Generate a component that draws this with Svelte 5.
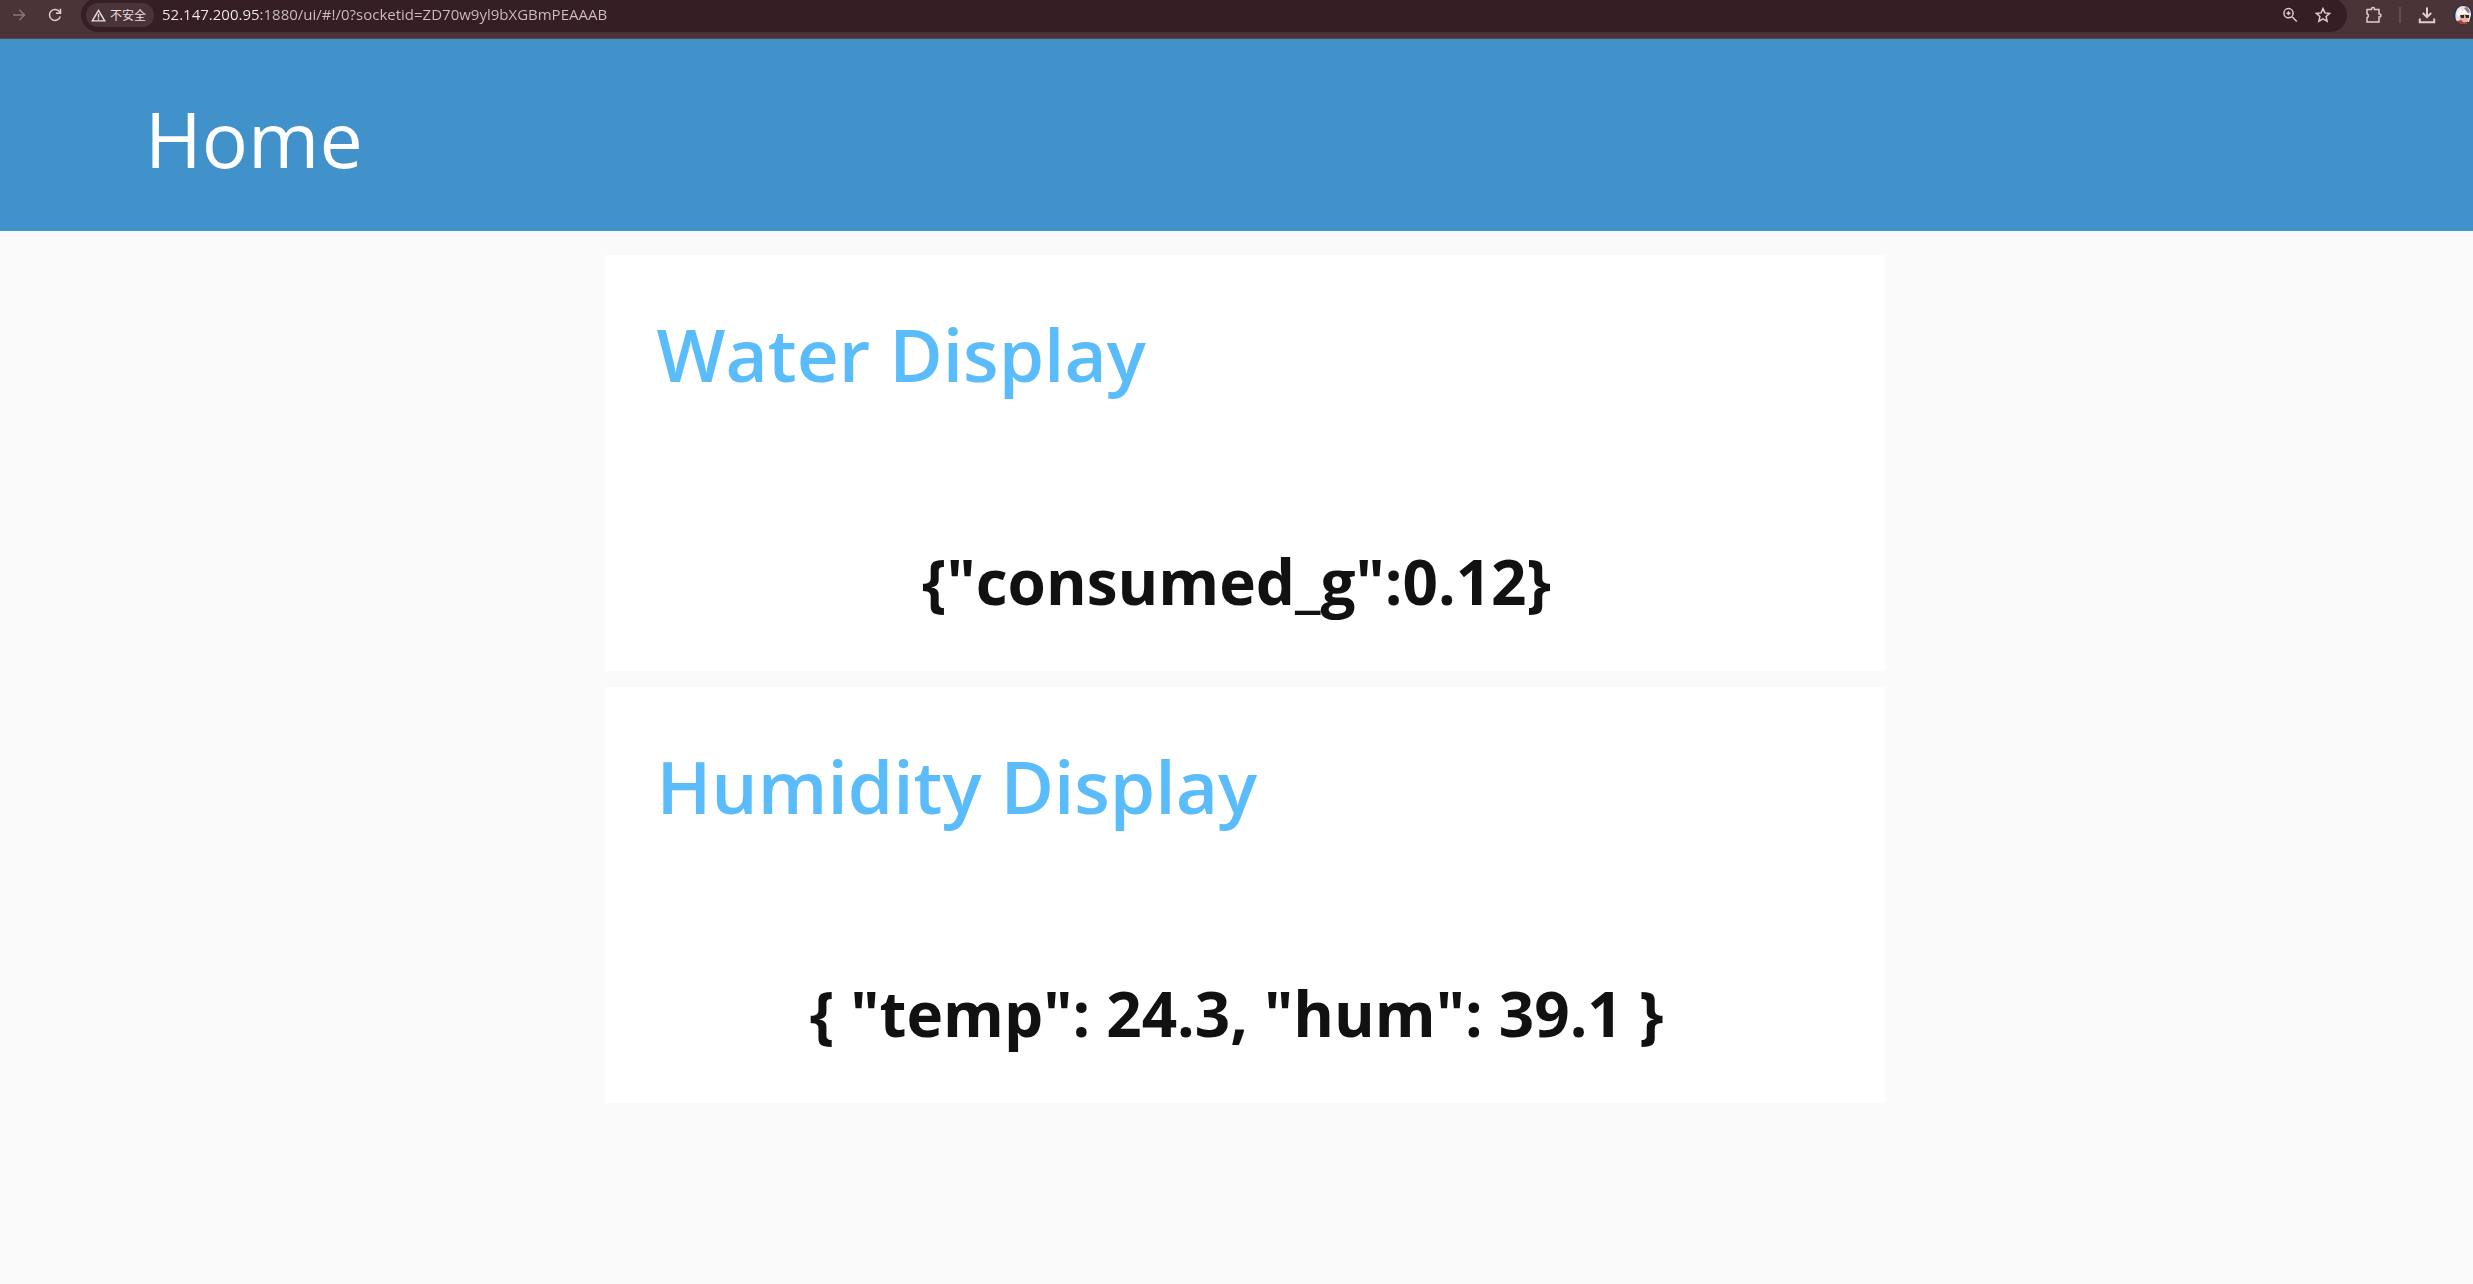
<script>
  const address = '52.147.200.95:1880/ui/#!/0?socketid=ZD70w9yl9bXGBmPEAAAB';
  const groups = [
    { title: 'Water Display', value: '{"consumed_g":0.12}' },
    { title: 'Humidity Display', value: '{ "temp": 24.3, "hum": 39.1 }' }
  ];
</script>

<div class="browser">
  <button class="icon forward" aria-label="Forward">
    <svg viewBox="0 0 16 16"><path d="M2 8h11M8.500 3l5 5-5 5" /></svg>
  </button>
  <button class="icon" aria-label="Reload">
    <svg viewBox="0 0 16 16"><path d="M12.800 5.200A5.500 5.500 0 1 0 13.300 9.500M13.500 1.800v4.500H9" /></svg>
  </button>
  <div class="omnibox">
    <button class="security">
      <svg viewBox="0 0 16 16"><path d="M8 2.500 14.600 13.700H1.400ZM8 6.500v3.500M8 11v1.500" /></svg>
      <span>不安全</span>
    </button>
    <input class="url" aria-label="Address" value={address} spellcheck="false" />
    <button class="icon" aria-label="Zoom">
      <svg viewBox="0 0 16 16"><circle cx="6.500" cy="6.200" r="4.600" /><path d="m10 9.700 4.800 4.800M6.500 4.200v4M4.500 6.200h4" /></svg>
    </button>
    <button class="icon star" aria-label="Bookmark">
      <svg viewBox="0 0 16 16"><path d="m8 1.600 1.900 4.300 4.700.5-3.500 3.100 1 4.700L8 11.800l-4.100 2.400 1-4.700L1.400 6.400l4.700-.5Z" /></svg>
    </button>
  </div>
  <button class="icon large" aria-label="Extensions">
    <svg viewBox="0 0 18 18"><path d="M2 3.500h4.500V3a1.500 1.500 0 0 1 3 0v.500H14V8h.500a1.500 1.500 0 0 1 0 3H14v5H2v-4.200a2.200 2.200 0 0 0 0-4.100Z" /></svg>
  </button>
  <span class="divider"></span>
  <button class="icon large" aria-label="Downloads">
    <svg viewBox="0 0 18 18"><path class="bold" d="M9 1.500v9.500M4.800 7 9 11.200 13.200 7M1.800 12.500v3.700h14.400v-3.700" /></svg>
  </button>
  <button class="profile" aria-label="Profile">
    <svg viewBox="0 0 20 20">
      <circle cx="10" cy="10" r="10" fill="#32304f" />
      <path d="M3 15C1 8 4 1 10 1s8 4 8 9l-2 7H5Z" fill="#e9dfdf" />
      <path d="M7 10c3-2 6-2 9 0l-1 5-4 3-4-3Z" fill="#e5b29b" />
      <path d="M7 10h4v3H8ZM12 10h4v3h-3Z" fill="#30282b" />
      <path d="m4 9 3-6 2 5 2-4 5 6-5-1-6 2Z" fill="#fff8f3" />
      <path d="m4 16 4-1 3 3 4-2-1 3H7Z" fill="#b23d36" />
      <path d="m11 3 3-1 3 5-2 1Z" fill="#817985" />
    </svg>
  </button>
</div>

<header><h1>Home</h1></header>

<main>
  {#each groups as group}
    <section>
      <h2>{group.title}</h2>
      <p>{group.value}</p>
    </section>
  {/each}
</main>

<style>
  :global(body) {
    margin: 0;
    background: #fafafa;
    font-family: "Open Sans", "Noto Sans", "Noto Sans CJK SC", sans-serif;
    overflow-x: hidden;
  }
  button {
    border: 0;
    padding: 0;
    background: none;
    color: inherit;
    font: inherit;
    flex: none;
  }
  svg {
    display: block;
    width: 100%;
    height: 100%;
  }
  .icon path,
  .icon circle,
  .security path {
    fill: none;
    stroke: currentColor;
    stroke-width: 1.5;
  }
  .icon path.bold {
    stroke-width: 2;
  }
  .browser {
    display: flex;
    align-items: center;
    box-sizing: border-box;
    height: 39px;
    padding: 0 0 8px 11px;
    background: #4b3438;
    border-bottom: 1px solid #5c4549;
    color: #e8c9ce;
    overflow: hidden;
  }
  .icon {
    width: 16px;
    height: 16px;
  }
  .forward {
    color: #8a7478;
    margin-right: 20px;
  }
  .omnibox {
    display: flex;
    align-items: center;
    flex: 1;
    min-width: 0;
    box-sizing: border-box;
    height: 34px;
    margin: 0 18px;
    padding: 0 16px 0 5px;
    border-radius: 17px;
    background: #351f24;
    color: #dccbce;
  }
  .security {
    display: flex;
    align-items: center;
    gap: 4px;
    height: 24px;
    padding: 0 8px 0 5px;
    border-radius: 12px;
    background: #4b3438;
    color: #eadfe1;
    font-family: "Noto Sans CJK SC", sans-serif;
    font-size: 12px;
    line-height: 24px;
  }
  .security svg {
    width: 15px;
    height: 15px;
  }
  .url {
    flex: 1;
    min-width: 0;
    height: 24px;
    box-sizing: border-box;
    margin: 0 8px;
    padding: 0 0 2px;
    border: 0;
    outline: 0;
    background: linear-gradient(90deg, #f7ecee 97px, #cfc0c3 97px);
    background-clip: text;
    -webkit-text-fill-color: transparent;
    font-family: "Open Sans", sans-serif;
    font-size: 15px;
  }
  .star {
    margin-left: 17px;
  }
  .large {
    width: 18px;
    height: 18px;
  }
  .divider {
    width: 2px;
    height: 16px;
    margin: 0 17px 0 16px;
    background: #664d52;
  }
  .profile {
    width: 20px;
    height: 20px;
    margin: 0 0 0 17px;
  }
  header {
    box-sizing: border-box;
    height: 192px;
    padding: 48px 145px;
    background: #4192ca;
    color: #fff;
  }
  h1 {
    margin: 0;
    font-size: 77px;
    font-weight: 400;
    line-height: 104px;
  }
  main {
    display: flex;
    flex-direction: column;
    align-items: center;
    gap: 16px;
    padding: 24px 0 24px 16px;
  }
  section {
    box-sizing: border-box;
    width: 100%;
    max-width: 1280px;
    padding: 48px 52px;
    background: #fff;
  }
  h2 {
    margin: 0;
    color: #5bbcfb;
    font-size: 73px;
    font-weight: 600;
    line-height: 102px;
  }
  p {
    margin: 134px 0 0;
    padding-right: 16px;
    color: #111;
    font-size: 62px;
    font-weight: 700;
    line-height: 84px;
    text-align: center;
    white-space: pre-wrap;
  }
</style>
